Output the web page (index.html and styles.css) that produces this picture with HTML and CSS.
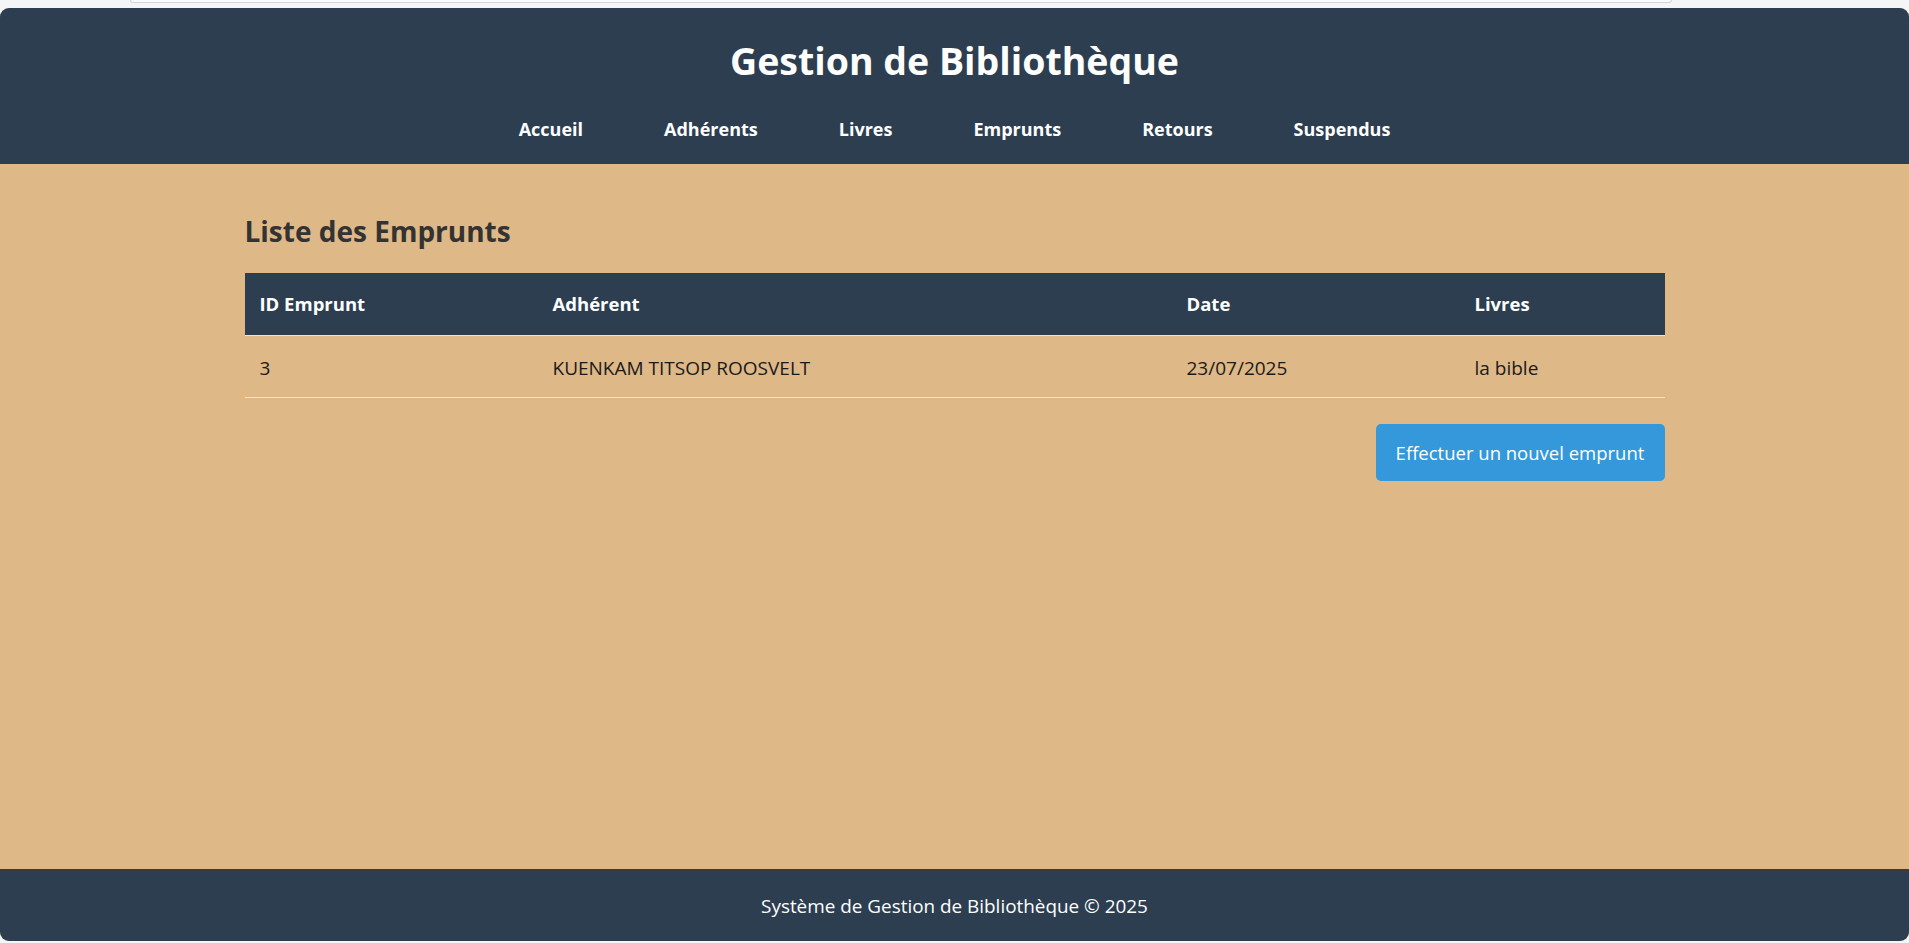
FILE: index.html
```html
<!DOCTYPE html>
<html lang="fr">
<head>
<meta charset="utf-8">
<title>Gestion de Bibliothèque</title>
<link rel="stylesheet" href="styles.css">
</head>
<body>
<div class="topstrip"><div class="topbox"></div></div>
<div class="page">
  <header class="site-header">
    <h1 class="site-title">Gestion de Bibliothèque</h1>
    <nav class="nav">
      <a href="#" class="nav-link">Accueil</a>
      <a href="#" class="nav-link">Adhérents</a>
      <a href="#" class="nav-link">Livres</a>
      <a href="#" class="nav-link">Emprunts</a>
      <a href="#" class="nav-link">Retours</a>
      <a href="#" class="nav-link">Suspendus</a>
    </nav>
  </header>
  <main class="main">
    <div class="container">
      <h2 class="section-title">Liste des Emprunts</h2>
      <table class="table">
        <thead>
          <tr>
            <th class="col-id">ID Emprunt</th>
            <th class="col-adh">Adhérent</th>
            <th class="col-date">Date</th>
            <th class="col-livres">Livres</th>
          </tr>
        </thead>
        <tbody>
          <tr>
            <td>3</td>
            <td>KUENKAM TITSOP ROOSVELT</td>
            <td>23/07/2025</td>
            <td>la bible</td>
          </tr>
        </tbody>
      </table>
      <div class="actions">
        <a href="#" class="btn">Effectuer un nouvel emprunt</a>
      </div>
    </div>
  </main>
  <footer class="site-footer">Système de Gestion de Bibliothèque © 2025</footer>
</div>
</body>
</html>
```
FILE: styles.css
```css
* { box-sizing: border-box; }
html, body { margin: 0; padding: 0; }
body {
  background: #f4f5f7;
  font-family: "Open Sans", "Noto Sans", sans-serif;
  font-size: 18.5px;
  height: 943px;
  overflow: hidden;
}
.topstrip {
  height: 8px;
  padding: 0 237px 0 130px;
}
.topbox {
  height: 3px;
  border: 1px solid #d3d6da;
  border-top: none;
  border-radius: 0 0 8px 8px;
  background: #fbfbfc;
}
.page {
  height: 933px;
  border-radius: 9px;
  overflow: hidden;
  display: flex;
  flex-direction: column;
  background: #deb887;
}
.site-header {
  background: #2c3e50;
  color: #fff;
  height: 156px;
  padding-top: 29px;
  text-align: center;
}
.site-title {
  margin: 0;
  font-size: 37.5px;
  line-height: 48px;
  font-weight: 700;
}
.nav {
  margin-top: 30px;
  display: flex;
  justify-content: center;
  gap: 81px;
}
.nav-link {
  color: #fff;
  text-decoration: none;
  font-weight: 700;
  font-size: 18px;
  line-height: 28px;
}
.main {
  flex: 1;
  padding-top: 47px;
}
.container {
  width: 1420px;
  margin: 0 auto;
}
.section-title {
  margin: 0 0 22px;
  font-size: 28px;
  line-height: 40px;
  font-weight: 700;
  color: #333;
}
.table {
  width: 100%;
  border-collapse: collapse;
  table-layout: fixed;
}
.table th, .table td {
  text-align: left;
  padding: 0 15px;
  height: 62px;
  border-bottom: 1px solid #efe2cf;
}
.table th {
  background: #2c3e50;
  color: #fff;
  font-weight: 700;
}
.table td {
  color: #1a1a1a;
  font-size: 19px;
  padding-top: 3px;
}
.col-id { width: 293px; }
.col-adh { width: 634px; }
.col-date { width: 288px; }
.col-livres { width: 205px; }
.actions {
  display: flex;
  justify-content: flex-end;
  margin-top: 26px;
}
.btn {
  display: inline-flex;
  align-items: center;
  justify-content: center;
  width: 289px;
  height: 57px;
  background: #3498db;
  color: #fff;
  text-decoration: none;
  border-radius: 5px;
}
.site-footer {
  background: #2c3e50;
  color: #fff;
  border-top: 2px solid #3a3a3a;
  height: 72px;
  line-height: 70px;
  font-size: 18.9px;
  text-align: center;
}
```
